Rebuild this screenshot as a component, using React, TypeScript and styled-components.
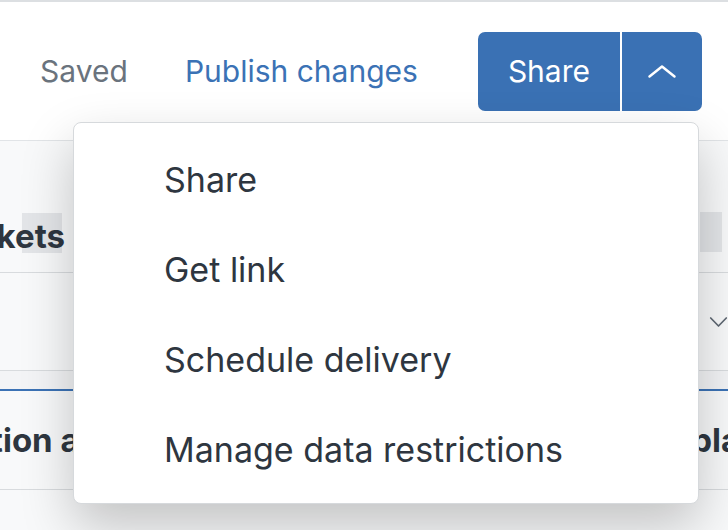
import React from 'react';
import styled, { createGlobalStyle } from 'styled-components';

const GlobalStyle = createGlobalStyle`
  body {
    margin: 0;
    background: #ffffff;
    font-family: Inter, "Liberation Sans", sans-serif;
  }
`;

const Page = styled.div`
  position: relative;
  width: 728px;
  height: 530px;
  overflow: hidden;
  border-top: 2px solid #dcdfe2;
  box-sizing: border-box;
  background: #ffffff;
`;

const Header = styled.header`
  height: 138px;
  display: flex;
  align-items: center;
  justify-content: flex-end;
  gap: 60px;
  padding-right: 26px;
`;

const StatusText = styled.span`
  font-size: 30px;
  color: #6a737d;
  margin-right: -3px;
`;

const LinkButton = styled.button`
  border: none;
  background: none;
  padding: 0;
  font-family: inherit;
  font-size: 30px;
  color: #3b72b5;
`;

const ButtonGroup = styled.div`
  display: flex;
  gap: 2px;
`;

const PrimaryButton = styled.button<{ side: 'left' | 'right' }>`
  height: 79px;
  border: none;
  background: #3a71b4;
  color: #ffffff;
  font-family: inherit;
  font-size: 30px;
  display: flex;
  align-items: center;
  justify-content: center;
  padding: ${(p) => (p.side === 'left' ? '0 30px' : '0')};
  width: ${(p) => (p.side === 'right' ? '80px' : 'auto')};
  border-radius: ${(p) => (p.side === 'left' ? '7px 0 0 7px' : '0 7px 7px 0')};
`;

const Content = styled.section`
  height: 390px;
  background: #f8f9fa;
  border-top: 1px solid #e1e4e7;
`;

const Row = styled.div<{ height: number }>`
  height: ${(p) => p.height}px;
  display: grid;
  grid-template-columns: 130px 1fr 88px;
  border-bottom: 1px solid #d8dbde;
`;

const Band = styled.div`
  height: 18px;
  background: #f3f4f6;
  border-bottom: 2px solid #3b72b5;
`;

const Cell = styled.div<{ align?: 'start' | 'end'; inset?: number }>`
  display: flex;
  align-items: center;
  justify-content: ${(p) => (p.align === 'end' ? 'flex-end' : 'flex-start')};
  padding: ${(p) => (p.align === 'end' ? `0 ${p.inset || 0}px 0 0` : `0 0 0 ${p.inset || 0}px`)};
  overflow: hidden;
  white-space: nowrap;
`;

const HeaderCell = styled(Cell)`
  align-items: flex-end;
  padding-bottom: 16px;
`;

const Label = styled.span`
  font-size: 33px;
  font-weight: 700;
  color: #2e3640;
  line-height: 40px;
`;

const MarkedLabel = styled(Label)<{ markRight: number; markWidth: number }>`
  position: relative;
  z-index: 0;
  &::before {
    content: '';
    position: absolute;
    top: -3px;
    height: 40px;
    right: ${(p) => p.markRight}px;
    width: ${(p) => p.markWidth}px;
    background: #e3e5e8;
    z-index: -1;
  }
`;

const Skeleton = styled.div`
  width: 22px;
  height: 40px;
  margin-bottom: 4px;
  background: #e3e5e8;
`;

const Menu = styled.div`
  position: absolute;
  top: 120px;
  left: 73px;
  width: 626px;
  box-sizing: border-box;
  padding: 11px 0 9px;
  background: #ffffff;
  border: 1px solid #d6d9dc;
  border-radius: 8px;
  box-shadow: 0 22px 52px rgba(0, 0, 0, 0.22);
  z-index: 5;
`;

const MenuItem = styled.div`
  height: 90px;
  display: flex;
  align-items: center;
  padding-left: 90px;
  font-size: 34px;
  color: #2e3640;
`;

const Chevron = ({ dir, color, w, h, sw }: { dir: 'up' | 'down'; color: string; w: number; h: number; sw: number }) => (
  <svg width={w} height={h} viewBox={`0 0 ${w} ${h}`} fill="none">
    <polyline
      points={
        dir === 'up'
          ? `${sw},${h - sw} ${w / 2},${sw} ${w - sw},${h - sw}`
          : `${sw},${sw} ${w / 2},${h - sw} ${w - sw},${sw}`
      }
      stroke={color}
      strokeWidth={sw}
      strokeLinecap="round"
      strokeLinejoin="round"
    />
  </svg>
);

const menuItems = ['Share', 'Get link', 'Schedule delivery', 'Manage data restrictions'];

export default function App() {
  return (
    <>
      <GlobalStyle />
      <Page>
        <Header>
          <StatusText>Saved</StatusText>
          <LinkButton>Publish changes</LinkButton>
          <ButtonGroup>
            <PrimaryButton side="left">Share</PrimaryButton>
            <PrimaryButton side="right">
              <Chevron dir="up" color="#ffffff" w={30} h={15} sw={2.5} />
            </PrimaryButton>
          </ButtonGroup>
        </Header>
        <Content>
          <Row height={131}>
            <HeaderCell align="end" inset={65}>
              <MarkedLabel markRight={3} markWidth={40}>
                Tickets
              </MarkedLabel>
            </HeaderCell>
            <HeaderCell />
            <HeaderCell inset={60}>
              <Skeleton />
            </HeaderCell>
          </Row>
          <Row height={97}>
            <Cell />
            <Cell />
            <Cell inset={69}>
              <Chevron dir="down" color="#5f6873" w={20} h={12} sw={1.8} />
            </Cell>
          </Row>
          <Band />
          <Row height={98}>
            <Cell align="end" inset={9}>
              <Label>Resolution and</Label>
            </Cell>
            <Cell />
            <Cell>
              <Label>Display</Label>
            </Cell>
          </Row>
        </Content>
        <Menu>
          {menuItems.map((item) => (
            <MenuItem key={item}>{item}</MenuItem>
          ))}
        </Menu>
      </Page>
    </>
  );
}
